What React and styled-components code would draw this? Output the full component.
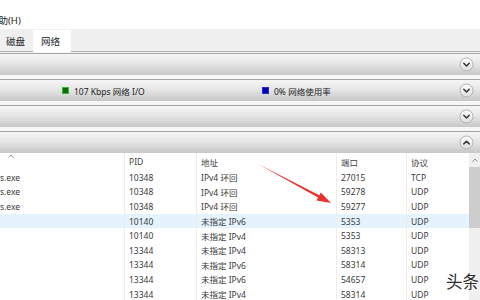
import React from "react";
import styled, { createGlobalStyle } from "styled-components";

const Global = createGlobalStyle`
  html, body { margin: 0; padding: 0; background: #ffffff; }
  body {
    width: 480px; height: 300px; overflow: hidden;
    font-family: "Noto Sans", "Noto Sans CJK SC", sans-serif;
    color: #333;
  }
`;

const Window = styled.div`
  position: relative;
  width: 480px;
  height: 300px;
  overflow: hidden;
  display: flex;
  flex-direction: column;
  background: #fff;
`;

const MenuBar = styled.div`
  height: 29px;
  display: flex;
  align-items: flex-end;
  padding-bottom: 2px;
  box-sizing: border-box;
  overflow: hidden;
`;

const MenuItem = styled.span`
  font-size: 9.5px;
  line-height: 12px;
  margin-left: -11px;
  color: #222;
  white-space: nowrap;
`;

const TabStrip = styled.div`
  height: 23px;
  box-sizing: border-box;
  background: #f0f0f0;
  border-bottom: 1px solid #acacac;
  display: flex;
  align-items: stretch;
  padding-top: 1px;
`;

const Tab = styled.div`
  font-size: 9.5px;
  display: flex;
  align-items: center;
  padding: ${p => (p.$active ? "0 11px 0 8px" : "0 8px 0 6px")};
  background: ${p => (p.$active ? "#ffffff" : "transparent")};
  margin-bottom: ${p => (p.$active ? "-1px" : "0")};
  color: #222;
`;

const BandList = styled.div`
  display: flex;
  flex-direction: column;
  gap: 4px;
  padding-top: 1px;
  background: #f7f7f7;
`;

const Band = styled.div`
  height: 21px;
  border-top: 1px solid #a3a3a3;
  background: linear-gradient(#f6f6f6 0%, #e6e6e6 45%, #c7c7c7 100%);
  display: flex;
  align-items: center;
  justify-content: space-between;
  padding-right: 6px;
  padding-left: 62px;
`;

const BandContent = styled.div`
  display: flex;
  align-items: center;
`;

const Legend = styled.div`
  width: ${p => p.$w || "auto"};
  display: flex;
  align-items: center;
  gap: 5px;
  font-size: 8.5px;
  color: #222;
`;

const Swatch = styled.span`
  width: 7px;
  height: 7px;
  box-sizing: border-box;
  background: ${p => p.$color};
  border: 1px solid ${p => p.$edge};
`;

const TableArea = styled.div`
  flex: 1;
  display: flex;
  background: #fff;
  min-height: 0;
`;

const Table = styled.div`
  flex: 1;
  display: grid;
  grid-template-columns: 124px 72px 140px 70px 1fr;
  grid-auto-rows: 14.6px;
  grid-template-rows: 17px;
  align-content: start;
  font-size: 8.5px;
  color: #3a3a3a;
`;

const Cell = styled.div`
  display: flex;
  align-items: center;
  padding-left: ${p => (p.$first ? "0" : "4px")};
  border-left: ${p => (p.$first ? "none" : "1px solid #ededed")};
  background: ${p => (p.$sel ? "#e5f3ff" : "transparent")};
  white-space: nowrap;
  overflow: hidden;
  color: ${p => (p.$head ? "#444" : "#3a3a3a")};
`;

const HeadName = styled(Cell)`
  align-items: flex-start;
  padding-left: 8px;
`;

const Scrollbar = styled.div`
  width: 11px;
  background: #f0f0f0;
  display: flex;
  flex-direction: column;
  align-items: stretch;
`;

const ScrollArrow = styled.div`
  height: 14px;
  display: flex;
  align-items: center;
  justify-content: center;
`;

const Thumb = styled.div`
  margin-top: 0px;
  height: 61px;
  background: #cdcdcd;
`;

const Overlay = styled.svg`
  position: absolute;
  left: 0;
  top: 0;
  pointer-events: none;
`;

const Watermark = styled.div`
  position: absolute;
  left: 446px;
  top: 269px;
  font-family: "Noto Sans CJK SC", sans-serif;
  font-size: 16.5px;
  color: #2b2b2b;
  letter-spacing: 0px;
  text-shadow: 0 0 2px #fff, 0 0 2px #fff;
`;

function Chevron({ up }) {
  return (
    <svg width="15" height="15" viewBox="0 0 15 15">
      <defs>
        <linearGradient id={up ? "cgu" : "cgd"} x1="0" y1="0" x2="0" y2="1">
          <stop offset="0" stopColor="#ffffff" />
          <stop offset="1" stopColor="#dcdcdc" />
        </linearGradient>
      </defs>
      <circle cx="7.5" cy="7.5" r="6.5" fill={`url(#${up ? "cgu" : "cgd"})`} stroke="#b4b4b4" strokeWidth="1" />
      <path
        d={up ? "M4.8 8.9 L7.5 6.2 L10.2 8.9" : "M4.8 6.3 L7.5 9 L10.2 6.3"}
        fill="none"
        stroke="#333"
        strokeWidth="1.5"
        strokeLinecap="round"
        strokeLinejoin="round"
      />
    </svg>
  );
}

const rows = [
  ["s.exe", "10348", "IPv4 环回", "27015", "TCP"],
  ["s.exe", "10348", "IPv4 环回", "59278", "UDP"],
  ["s.exe", "10348", "IPv4 环回", "59277", "UDP"],
  ["", "10140", "未指定 IPv6", "5353", "UDP", true],
  ["", "10140", "未指定 IPv4", "5353", "UDP"],
  ["", "13344", "未指定 IPv4", "58313", "UDP"],
  ["", "13344", "未指定 IPv6", "58314", "UDP"],
  ["", "13344", "未指定 IPv6", "54657", "UDP"],
  ["", "13344", "未指定 IPv4", "58314", "UDP"],
];

export default function App() {
  return (
    <Window>
      <Global />
      <MenuBar>
        <MenuItem>帮助(H)</MenuItem>
      </MenuBar>
      <TabStrip>
        <Tab>磁盘</Tab>
        <Tab $active>网络</Tab>
      </TabStrip>
      <BandList>
        <Band>
          <BandContent />
          <Chevron />
        </Band>
        <Band>
          <BandContent>
            <Legend $w="200px">
              <Swatch $color="#0b6e0b" $edge="#37b837" />
              <span>107 Kbps 网络 I/O</span>
            </Legend>
            <Legend>
              <Swatch $color="#0000b4" $edge="#2a2ad0" />
              <span>0% 网络使用率</span>
            </Legend>
          </BandContent>
          <Chevron />
        </Band>
        <Band>
          <BandContent />
          <Chevron />
        </Band>
        <Band>
          <BandContent />
          <Chevron up />
        </Band>
      </BandList>
      <TableArea>
        <Table>
          <HeadName $first $head>
            <svg width="6" height="4" viewBox="0 0 6 4" style={{ marginTop: 1 }}>
              <path d="M0.5 3.5 L3 1 L5.5 3.5" fill="none" stroke="#9a9a9a" strokeWidth="1" />
            </svg>
          </HeadName>
          <Cell $head>PID</Cell>
          <Cell $head>地址</Cell>
          <Cell $head>端口</Cell>
          <Cell $head>协议</Cell>
          {rows.map((r, i) => (
            <React.Fragment key={i}>
              <Cell $first $sel={r[5]}>{r[0]}</Cell>
              <Cell $sel={r[5]}>{r[1]}</Cell>
              <Cell $sel={r[5]}>{r[2]}</Cell>
              <Cell $sel={r[5]}>{r[3]}</Cell>
              <Cell $sel={r[5]}>{r[4]}</Cell>
            </React.Fragment>
          ))}
        </Table>
        <Scrollbar>
          <ScrollArrow>
            <svg width="6" height="4" viewBox="0 0 6 4">
              <path d="M0.5 3.5 L3 1 L5.5 3.5" fill="none" stroke="#8a8a8a" strokeWidth="1" />
            </svg>
          </ScrollArrow>
          <Thumb />
        </Scrollbar>
      </TableArea>
      <Overlay width="480" height="300" viewBox="0 0 480 300">
        <polygon
          points="258,164 319.3,195.3 320.8,192.4 331,203 316.5,200.4 318,197.6"
          fill="#e8332e"
        />
      </Overlay>
      <Watermark>头条</Watermark>
    </Window>
  );
}
